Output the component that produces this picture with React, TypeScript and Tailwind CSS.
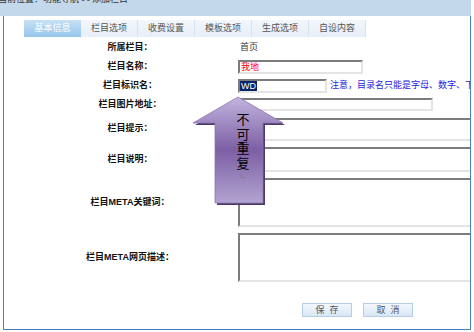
import React from 'react';

const font = { fontFamily: '"Liberation Sans", "Noto Sans CJK SC", sans-serif' };

const tabs = ['基本信息', '栏目选项', '收费设置', '模板选项', '生成选项', '自设内容'];

function Row({
  label,
  height,
  children,
}: {
  label: string;
  height: string;
  children?: React.ReactNode;
}) {
  return (
    <div className={`flex items-center pl-[20px] ${height}`}>
      <div className="w-[212px] shrink-0 text-center text-[9px] font-bold text-[#111]">{label}</div>
      <div className="ml-[2px] flex flex-1 items-center">{children}</div>
    </div>
  );
}

const inset =
  'border-2 border-t-[#7b7b7b] border-l-[#7b7b7b] border-b-[#e4e4e4] border-r-[#e4e4e4] bg-white';

function ArrowNote() {
  // 紫色提示箭头，压在表单上面
  return (
    <div className="absolute left-[191px] top-[95px] h-[114px] w-[96px]">
      <svg width="96" height="114" viewBox="0 0 96 114">
        <defs>
          <linearGradient id="arrowFill" x1="0" y1="0" x2="0" y2="1">
            <stop offset="0" stopColor="#c2b4de" />
            <stop offset="0.5" stopColor="#7c5fa4" />
            <stop offset="1" stopColor="#b3a4d1" />
          </linearGradient>
        </defs>
        <polygon points="49,4 94,30 74,30 74,110 26,110 26,30 4,30" fill="#4b3a6a" />
        <polygon
          points="47,2 92,28 72,28 72,108 24,108 24,28 2,28"
          fill="url(#arrowFill)"
          stroke="#8a76ad"
          strokeWidth="0.8"
        />
      </svg>
      <div
        className="absolute left-[44px] top-[17px] flex w-[16px] flex-col items-center text-[13px] leading-[14.5px] text-black"
        style={{ fontFamily: '"Noto Sans CJK SC", sans-serif' }}
      >
        <span>不</span>
        <span>可</span>
        <span>重</span>
        <span>复</span>
        <span className="mt-[1px] text-[7px] leading-[8px] text-[#777]">ㄴ</span>
      </div>
    </div>
  );
}

export default function App() {
  return (
    <div className="relative h-[332px] w-[474px] overflow-hidden bg-white" style={font}>
      <div className="h-[16px] w-[471px] overflow-hidden bg-[#c3d8ea]">
        <div className="-ml-[2px] -mt-[7px] whitespace-nowrap text-[9px] leading-[12px] text-[#333]">
          当前位置：功能导航 &gt;&gt;添加栏目
        </div>
      </div>

      <div className="ml-[3px] h-[314px] w-[468px] overflow-hidden border-x border-b border-[#4a7fc2]">
        <div className="mt-[4px] flex h-[17px] pl-[20px]">
          {tabs.map((t, i) => (
            <div
              key={t}
              className={`flex w-[57px] items-center justify-center text-[9px] ${
                i === 0
                  ? 'bg-gradient-to-b from-[#c6e1f6] to-[#97c6ed] text-white'
                  : 'border-r border-[#d3e1f0] bg-gradient-to-b from-[#f3f7fc] to-[#e6eef8] text-[#555]'
              }`}
            >
              {t}
            </div>
          ))}
        </div>

        <div className="mt-[1px]">
          <Row label="所属栏目：" height="h-[19px]">
            <span className="pl-[2px] text-[9px] text-[#333]">首页</span>
          </Row>
          <Row label="栏目名称：" height="h-[19px]">
            <div className={`h-[14px] w-[125px] ${inset} flex items-center pl-[1px]`}>
              <span className="text-[9px] leading-[10px] text-[#ff0000]">我地</span>
            </div>
          </Row>
          <Row label="栏目标识名：" height="h-[19px]">
            <div className={`h-[14px] w-[89px] ${inset} flex items-stretch`}>
              <span className="bg-[#0a246a] px-[1px] text-[9px] leading-[10px] text-white">WD</span>
            </div>
            <span className="ml-[3px] whitespace-nowrap text-[9px] text-[#2424e0]">
              注意，目录名只能是字母、数字、下划线，并且不能重复
            </span>
          </Row>
          <Row label="栏目图片地址：" height="h-[19px]">
            <div className={`h-[13px] w-[195px] ${inset}`} />
          </Row>
          <Row label="栏目提示：" height="h-[30px]">
            <div className={`h-[23px] w-[260px] shrink-0 ${inset}`} />
          </Row>
          <Row label="栏目说明：" height="h-[31px]">
            <div className={`h-[25px] w-[260px] shrink-0 ${inset}`} />
          </Row>
          <Row label="栏目META关键词：" height="h-[55px]">
            <div className={`h-[49px] w-[260px] shrink-0 ${inset}`} />
          </Row>
          <Row label="栏目META网页描述：" height="h-[55px]">
            <div className={`h-[49px] w-[260px] shrink-0 ${inset}`} />
          </Row>

          <div className="flex gap-[11px] pl-[298px] pt-[18px]">
            {['保 存', '取 消'].map((b) => (
              <button
                key={b}
                className="flex h-[14px] w-[50px] items-center justify-center border border-[#b5cde6] bg-gradient-to-b from-[#f2f7fc] to-[#d9e7f5] text-[9px] leading-[10px] text-[#555]"
              >
                {b.replace(' ', '\u00a0\u00a0')}
              </button>
            ))}
          </div>
        </div>
      </div>

      <ArrowNote />
    </div>
  );
}
